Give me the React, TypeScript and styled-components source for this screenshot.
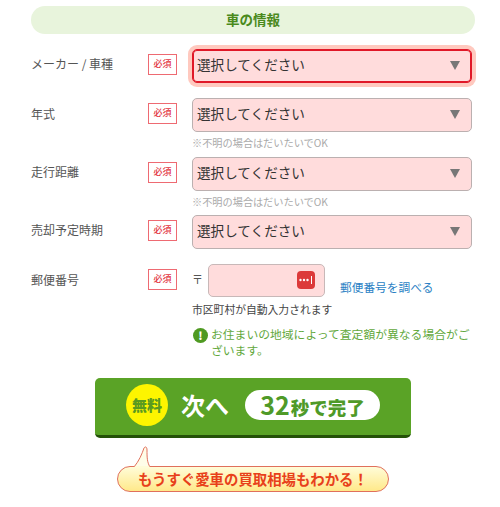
import { createGlobalStyle, styled } from "styled-components";

const GlobalStyle = createGlobalStyle`
  html, body {
    margin: 0;
    padding: 0;
    background: #fff;
    font-family: "Noto Sans CJK JP", "Liberation Sans", sans-serif;
    color: #333;
  }
`;

const Page = styled.div`
  width: 500px;
  height: 507px;
  padding: 6px 25px 0 31px;
  box-sizing: border-box;
  overflow: hidden;
`;

const Heading = styled.h2`
  margin: 0 0 15px;
  height: 28px;
  line-height: 26px;
  border-radius: 14px;
  background: #e8f4dc;
  color: #4a8a1c;
  font-size: 13.5px;
  font-weight: 700;
  text-align: center;
`;

const Row = styled.div<{ $gap: number }>`
  display: grid;
  grid-template-columns: 117px 44px 280px;
  align-items: start;
  margin-bottom: ${(p) => p.$gap}px;
`;

const Label = styled.div<{ $top?: number }>`
  margin-top: ${(p) => p.$top ?? 0}px;
  font-size: 12px;
  font-weight: 400;
  line-height: 30px;
  color: #555;
`;

const Required = styled.span`
  width: 29px;
  height: 21px;
  margin-top: 5px;
  box-sizing: border-box;
  border: 1px solid #ee6a72;
  color: #e23240;
  font-size: 9px;
  font-weight: 500;
  line-height: 18px;
  text-align: center;
`;

const SelectBox = styled.div<{ $focused?: boolean }>`
  position: relative;
  height: 34px;
  box-sizing: border-box;
  padding-left: 4px;
  border-radius: 5px;
  background: #ffdcdc;
  border: 1px solid ${(p) => (p.$focused ? "#e01828" : "#bbb0b0")};
  box-shadow: ${(p) => (p.$focused ? "0 0 0 1px #e01828 inset, 0 0 0 4px #ffc9bf" : "none")};
  font-size: 13.6px;
  line-height: 28px;
  color: #333;
`;

const Arrow = styled.span`
  position: absolute;
  right: 11px;
  top: 11px;
  width: 0;
  height: 0;
  border-left: 5px solid transparent;
  border-right: 5px solid transparent;
  border-top: 9px solid #777;
`;

const Note = styled.div`
  margin: 4px 0 0;
  font-size: 10.2px;
  line-height: 14px;
  color: #aaa;
`;

const PostalLine = styled.div`
  display: flex;
  align-items: flex-start;
`;

const PostalMark = styled.span`
  width: 16px;
  font-size: 11px;
  line-height: 31px;
  color: #555;
`;

const PostalInput = styled.div`
  position: relative;
  width: 117px;
  height: 33px;
  box-sizing: border-box;
  border-radius: 5px;
  border: 1px solid #c8b8b8;
  background: #ffdcdc;
`;

const DotsButton = styled.span`
  position: absolute;
  right: 9px;
  top: 6px;
  width: 18px;
  height: 18px;
  display: flex;
  border-radius: 4px;
  background: #dc3a3a;
`;

const LookupLink = styled.a`
  margin: 14px 0 0 15px;
  font-size: 11.7px;
  line-height: 18px;
  color: #2a7fc4;
`;

const AutoText = styled.div`
  margin-top: 3px;
  font-size: 10.8px;
  line-height: 18px;
  color: #444;
`;

const Notice = styled.div`
  display: flex;
  align-items: flex-start;
  gap: 3px;
  margin: 8px 0 0 1px;
  font-size: 11.8px;
  line-height: 16px;
  color: #62a83c;
`;

const NoticeIcon = styled.span`
  flex: none;
  width: 15px;
  height: 15px;
  margin-top: 2px;
  border-radius: 50%;
  background: #4f9a22;
  color: #fff;
  font-size: 11px;
  font-weight: 900;
  line-height: 15px;
  text-align: center;
`;

const NextButton = styled.button`
  display: flex;
  align-items: center;
  width: 316px;
  height: 60px;
  margin: 20px 0 0 64px;
  padding: 0 0 3px 31px;
  box-sizing: border-box;
  border: 0;
  border-bottom: 3px solid #245208;
  border-radius: 5px;
  background: #5aa326;
  font-family: inherit;
`;

const FreeBadge = styled.span`
  flex: none;
  width: 42px;
  height: 42px;
  border-radius: 50%;
  background: #fdf500;
  color: #5a9a20;
  font-size: 15px;
  font-weight: 900;
  line-height: 41px;
  text-align: center;
`;

const NextText = styled.span`
  margin-left: 13px;
  width: 64px;
  color: #fff;
  font-size: 24px;
  font-weight: 700;
  text-align: left;
  line-height: 28px;
`;

const TimePill = styled.span`
  width: 135px;
  height: 30px;
  border-radius: 15px;
  background: #fff;
  color: #4f9a28;
  font-size: 18.5px;
  font-weight: 900;
  line-height: 29px;
  text-align: center;
  white-space: nowrap;
`;

const TimeNumber = styled.span`
  font-size: 25px;
  font-weight: 700;
  margin-right: 1px;
`;

const BubbleWrap = styled.div`
  position: relative;
  width: 272px;
  margin: 28px 0 0 86px;
`;

const Bubble = styled.div`
  height: 26px;
  box-sizing: border-box;
  border: 1px solid #e0705c;
  border-radius: 13px;
  background: linear-gradient(#fffcd8, #ffe98a);
  color: #e8401a;
  font-size: 14.4px;
  font-weight: 700;
  line-height: 23px;
  text-align: center;
  white-space: nowrap;
`;

const BubbleTail = styled.svg`
  position: absolute;
  left: 17px;
  top: -20px;
  width: 17px;
  height: 22px;
`;

const chevronRows = [
  { label: "年式", note: true, gap: 7, top: 1 },
  { label: "走行距離", note: true, gap: 6, top: 0 },
  { label: "売却予定時期", note: false, gap: 15, top: 0 },
];

export default function App() {
  return (
    <Page>
      <GlobalStyle />
      <Heading>車の情報</Heading>
      <Row $gap={15}>
        <Label>メーカー / 車種</Label>
        <Required>必須</Required>
        <SelectBox $focused>
          選択してください
          <Arrow />
        </SelectBox>
      </Row>
      {chevronRows.map((row) => (
        <Row $gap={row.gap} key={row.label}>
          <Label $top={row.top}>{row.label}</Label>
          <Required>必須</Required>
          <div>
            <SelectBox>
              選択してください
              <Arrow />
            </SelectBox>
            {row.note && <Note>※不明の場合はだいたいでOK</Note>}
          </div>
        </Row>
      ))}
      <Row $gap={0}>
        <Label $top={1}>郵便番号</Label>
        <Required>必須</Required>
        <div>
          <PostalLine>
            <PostalMark>〒</PostalMark>
            <PostalInput>
              <DotsButton>
                <svg viewBox="0 0 18 18" width="18" height="18">
                  <circle cx="3.5" cy="9" r="1.2" fill="#fff" />
                  <circle cx="7" cy="9" r="1.2" fill="#fff" />
                  <circle cx="10.5" cy="9" r="1.2" fill="#fff" />
                  <rect x="14" y="5" width="1" height="8" fill="#fff" />
                </svg>
              </DotsButton>
            </PostalInput>
            <LookupLink>郵便番号を調べる</LookupLink>
          </PostalLine>
          <AutoText>市区町村が自動入力されます</AutoText>
          <Notice>
            <NoticeIcon>!</NoticeIcon>
            <span>お住まいの地域によって査定額が異なる場合がございます。</span>
          </Notice>
        </div>
      </Row>
      <NextButton>
        <FreeBadge>無料</FreeBadge>
        <NextText>次へ</NextText>
        <TimePill>
          <TimeNumber>32</TimeNumber>秒で完了
        </TimePill>
      </NextButton>
      <BubbleWrap>
        <BubbleTail viewBox="0 0 17 22">
          <path
            d="M0 21 C5 15 8 8 10 2 C11.5 0 13 1 13 4 C13 11 13 16 16 21"
            fill="#fffde8"
            stroke="#e0705c"
            strokeWidth="1"
          />
          <rect x="0.8" y="20" width="14.5" height="2" fill="#fffcd8" />
        </BubbleTail>
        <Bubble>もうすぐ愛車の買取相場もわかる！</Bubble>
      </BubbleWrap>
    </Page>
  );
}
